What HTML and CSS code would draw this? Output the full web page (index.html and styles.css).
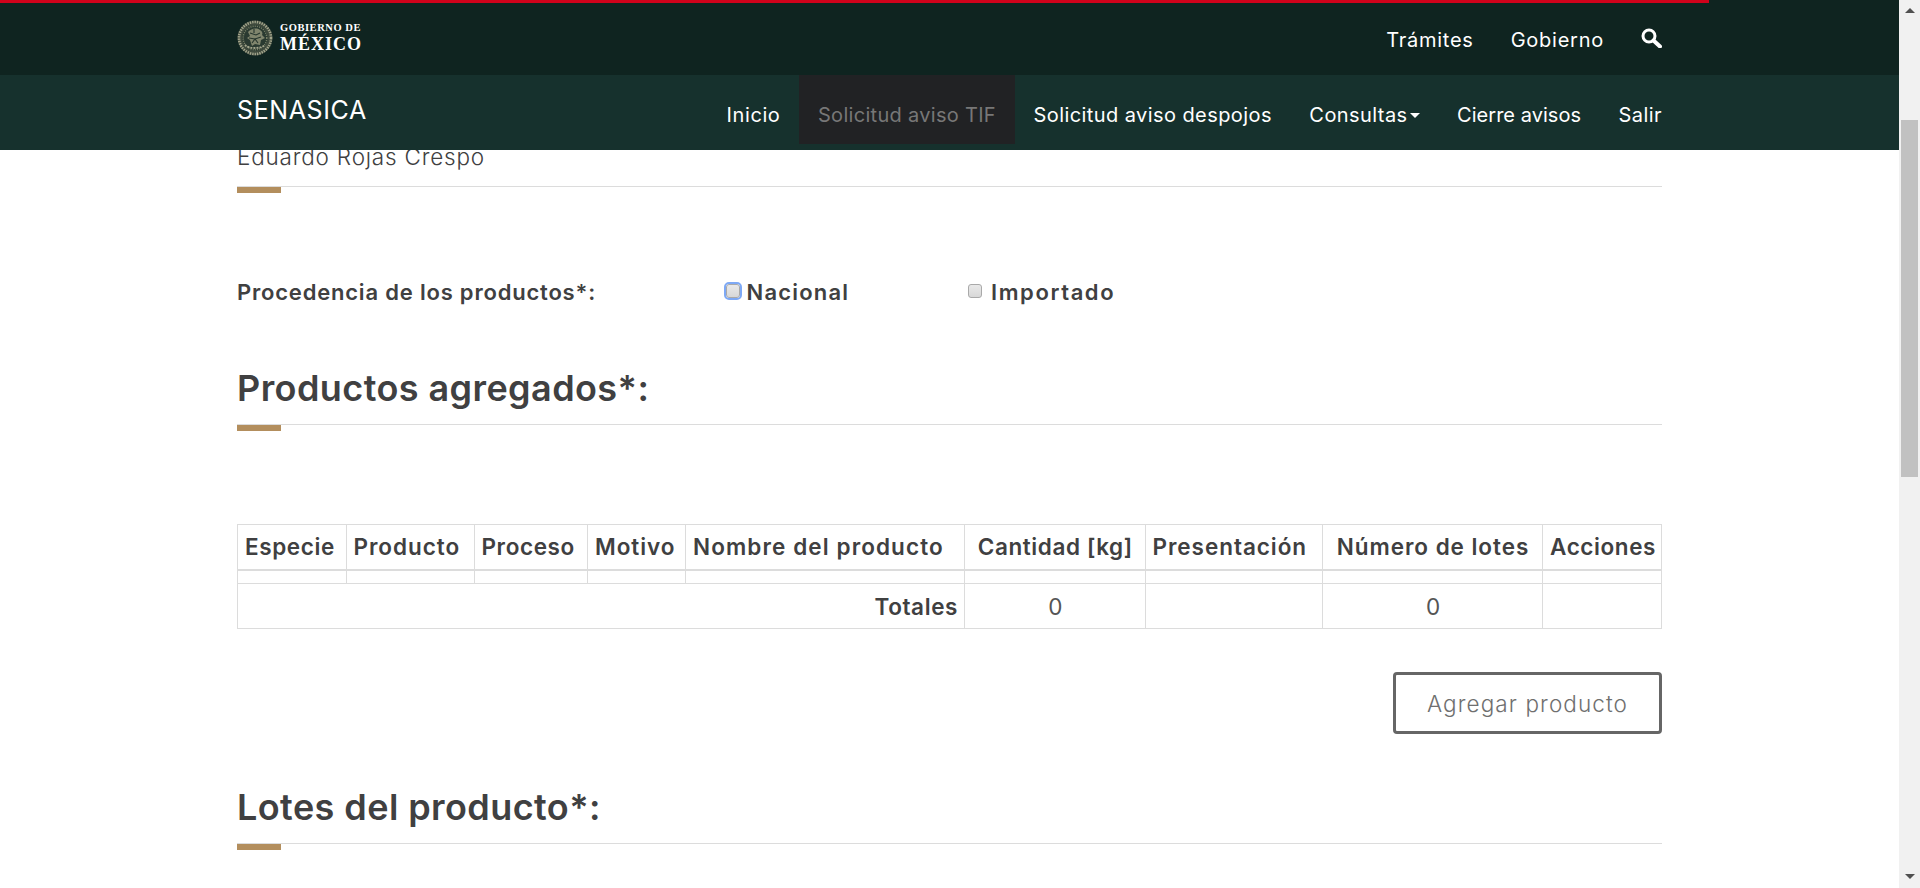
FILE: index.html
```html
<!DOCTYPE html>
<html lang="es">
<head>
<meta charset="utf-8">
<title>SENASICA</title>
<link rel="stylesheet" href="styles.css">
</head>
<body>
<div class="page">
  <div class="viewport">
    <header class="header">
      <div class="progress"></div>
      <div class="topbar">
        <div class="inner">
          <a class="logo">
            <svg class="emblem" viewBox="0 0 36 36" aria-hidden="true">
              <circle cx="18" cy="18" r="17.5" fill="#3f4a3d"/>
              <circle cx="18" cy="18" r="16" fill="none" stroke="#a3a58c" stroke-width="2.6" stroke-dasharray="1.4 1"/>
              <circle cx="18" cy="18" r="12.8" fill="#2a3a31"/>
              <circle cx="18" cy="18" r="11.8" fill="none" stroke="#7d8369" stroke-width="1.4" stroke-dasharray="1 1.2"/>
              <path d="M11 12c3-3 8-5 12-2 2 1 3 3 2 5l3 3-4 2-1 5-5-1-3 2-2-6-3-2 3-2z" fill="#80856d"/>
              <path d="M13 13l6 2 4-2M12 18l6 1 6-2M15 23l3-4 3 4M17 9v4" fill="none" stroke="#26362e" stroke-width="1.1"/>
              <path d="M8 25c4 4 16 4 20 0" fill="none" stroke="#a3a58c" stroke-width="1.8" stroke-dasharray="2 1"/>
            </svg>
            <span class="logo-text">
              <span class="logo-small">GOBIERNO DE</span>
              <span class="logo-big">MÉXICO</span>
            </span>
          </a>
          <nav class="topnav">
            <a>Trámites</a>
            <a>Gobierno</a>
            <svg class="search" viewBox="0 0 21 20" aria-hidden="true">
              <circle cx="8" cy="8" r="6" fill="none" stroke="#fff" stroke-width="3"/>
              <path d="M12.5 12.5L19 18.5" stroke="#fff" stroke-width="4" stroke-linecap="round"/>
            </svg>
          </nav>
        </div>
      </div>
      <div class="subbar">
        <div class="inner">
          <span class="brand">SENASICA</span>
          <nav class="mainnav">
            <a class="wide">Inicio</a>
            <a class="active">Solicitud aviso TIF</a>
            <a>Solicitud aviso despojos</a>
            <a>Consultas<span class="caret"></span></a>
            <a class="narrow">Cierre avisos</a>
            <a class="last">Salir</a>
          </nav>
        </div>
      </div>
    </header>

    <main class="content">
      <p class="name">Eduardo Rojas Crespo</p>
      <div class="rule"></div>

      <div class="origin">
        <span class="origin-label">Procedencia de los productos*:</span>
        <label class="check check-focus"><input type="checkbox"><span>Nacional</span></label>
        <label class="check check-wide"><input type="checkbox"><span>Importado</span></label>
      </div>

      <h2 class="title title-products">Productos agregados*:</h2>
      <div class="rule"></div>

      <table class="grid">
        <colgroup>
          <col class="c1"><col class="c2"><col class="c3"><col class="c4"><col class="c5">
          <col class="c6"><col class="c7"><col class="c8"><col class="c9">
        </colgroup>
        <thead>
          <tr>
            <th class="tight">Especie</th>
            <th>Producto</th>
            <th class="tight">Proceso</th>
            <th>Motivo</th>
            <th class="loose">Nombre del producto</th>
            <th class="center tight">Cantidad [kg]</th>
            <th>Presentación</th>
            <th class="center">Número de lotes</th>
            <th class="tight">Acciones</th>
          </tr>
        </thead>
        <tbody>
          <tr class="empty"><td></td><td></td><td></td><td></td><td></td><td></td><td></td><td></td><td></td></tr>
          <tr class="totals">
            <th colspan="5" class="right tight">Totales</th>
            <td class="center">0</td>
            <td></td>
            <td class="center">0</td>
            <td></td>
          </tr>
        </tbody>
      </table>

      <div class="actions"><button class="btn" type="button">Agregar producto</button></div>

      <h2 class="title title-lots">Lotes del producto*:</h2>
      <div class="rule"></div>
    </main>
  </div>

  <div class="scrollbar">
    <span class="arrow arrow-up"></span>
    <div class="track"><div class="thumb"></div></div>
    <span class="arrow arrow-down"></span>
  </div>
</div>
</body>
</html>
```

FILE: styles.css
```css
* { box-sizing: border-box; }

html, body {
  margin: 0;
  height: 100%;
  overflow: hidden;
  background: #fff;
}

body {
  font-family: Inter, "Open Sans", "Liberation Sans", sans-serif;
  color: #404041;
}

.page {
  display: flex;
  width: 1920px;
  height: 888px;
}

.viewport {
  position: relative;
  flex: 1;
  overflow: hidden;
}

/* Fixed header overlaying the scrolled page */
.header {
  position: absolute;
  top: 0;
  left: 0;
  right: 0;
  z-index: 2;
}

.progress {
  position: absolute;
  top: 0;
  left: 0;
  width: 1709px;
  height: 3px;
  background: #d0021b;
}

.inner {
  display: flex;
  justify-content: space-between;
  width: 1425px;
  height: 100%;
  margin-left: 237px;
}

.topbar {
  height: 75px;
  background: #0f2420;
}

.subbar {
  height: 75px;
  background: #16312d;
}

.logo {
  display: flex;
  align-items: center;
  gap: 7px;
  padding-top: 1px;
}

.emblem {
  width: 36px;
  height: 36px;
}

.logo-text {
  display: flex;
  flex-direction: column;
  font-family: "Liberation Serif", serif;
  font-weight: 700;
  color: #fff;
  line-height: 1;
}

.logo-small {
  font-size: 10.5px;
  letter-spacing: 0.55px;
}

.logo-big {
  font-size: 18px;
  letter-spacing: 1px;
  margin-top: 1px;
}

.topnav {
  display: flex;
  align-items: center;
  gap: 37px;
  font-size: 20px;
  color: #fff;
  letter-spacing: 0.75px;
  padding-top: 4px;
}

.search {
  width: 21px;
  height: 20px;
  margin-bottom: 3px;
}

.brand {
  font-size: 25px;
  line-height: 30px;
  color: #fff;
  padding-top: 20px;
  letter-spacing: 0.6px;
}

.mainnav {
  display: flex;
  height: 69px;
  font-size: 20px;
  color: #fff;
  letter-spacing: 0.42px;
}

.mainnav a {
  display: flex;
  align-items: center;
  padding: 10px 18.75px 0;
  white-space: nowrap;
}

.mainnav .last {
  padding-right: 0;
}

.mainnav .wide {
  letter-spacing: 0.6px;
}

.mainnav .narrow {
  letter-spacing: 0.04px;
}

.mainnav .active {
  background: #212224;
  color: #777;
  letter-spacing: 0.3px;
}

.caret {
  width: 0;
  height: 0;
  margin-left: 2px;
  margin-top: 2px;
  border-top: 5px solid #fff;
  border-left: 5px solid transparent;
  border-right: 5px solid transparent;
}

/* Page content */
.content {
  width: 1425px;
  margin-left: 237px;
  padding-top: 143px;
}

.name {
  margin: 0 0 16px;
  font-size: 22.5px;
  line-height: 27px;
  font-weight: 300;
  letter-spacing: 0.8px;
  color: #404041;
}

.rule {
  height: 1px;
  background: #dcdcdc;
}

.rule::after {
  content: "";
  display: block;
  width: 44px;
  height: 6px;
  background: #b38e5d;
  position: relative;
  top: 1px;
}

.origin {
  display: grid;
  grid-template-columns: 487px 244px 1fr;
  align-items: center;
  height: 28px;
  margin-top: 91px;
  font-size: 22px;
  font-weight: 600;
  letter-spacing: 0.8px;
}

.check {
  display: flex;
  align-items: center;
  letter-spacing: 1.2px;
}

.check-wide {
  letter-spacing: 1.6px;
}

.check input {
  appearance: none;
  width: 14px;
  height: 14px;
  margin: 0 9px 2px 0;
  border: 1px solid #a9a9a9;
  border-radius: 3px;
  background: linear-gradient(#e9e9e9, #d8d8d8);
}

.check-focus input {
  width: 14px;
  height: 14px;
  margin: 0 6.5px 2px 2px;
  outline: 2px solid #7ea9f5;
  outline-offset: 0;
}

.title {
  margin: 0;
  font-size: 36px;
  line-height: 44px;
  font-weight: 600;
  color: #404041;
  letter-spacing: 0.42px;
}

.title-products {
  margin-top: 60px;
  margin-bottom: 14px;
}

.grid {
  width: 1424px;
  margin-top: 99px;
  border-collapse: collapse;
  table-layout: fixed;
  font-size: 22.5px;
}

.c1 { width: 108.5px; }
.c2 { width: 128px; }
.c3 { width: 113.5px; }
.c4 { width: 98px; }
.c5 { width: 279px; }
.c6 { width: 180.5px; }
.c7 { width: 177.5px; }
.c8 { width: 220px; }
.c9 { width: 119px; }

.grid th,
.grid td {
  border: 1px solid #dcdcdc;
  padding: 0 6px 0 7px;
  white-space: nowrap;
  overflow: visible;
}

.grid th {
  height: 45px;
  font-weight: 600;
  text-align: left;
  letter-spacing: 0.95px;
}

.grid th.tight {
  letter-spacing: 0.6px;
}

.grid th.loose {
  letter-spacing: 1.1px;
}

.grid thead th {
  border-bottom-width: 2px;
}

.grid td {
  font-weight: 400;
  color: #555;
}

.grid .center { text-align: center; }
.grid .right { text-align: right; }

.empty td { height: 14px; padding: 0; }
.totals th, .totals td { height: 45px; }

.actions {
  display: flex;
  justify-content: flex-end;
  margin-top: 43px;
}

.btn {
  width: 269px;
  height: 62px;
  background: #fff;
  border: 3px solid #666;
  border-radius: 4px;
  font: 300 22.5px Inter, "Open Sans", sans-serif;
  letter-spacing: 1.1px;
  color: #6f6f6f;
}

.title-lots {
  margin-top: 51px;
  margin-bottom: 14px;
}

/* Scrollbar */
.scrollbar {
  display: flex;
  flex-direction: column;
  align-items: center;
  width: 21px;
  background: #f1f1f1;
}

.arrow {
  width: 0;
  height: 0;
  border-left: 5px solid transparent;
  border-right: 5px solid transparent;
}

.arrow-up {
  margin-top: 8px;
  border-bottom: 5px solid #505050;
}

.arrow-down {
  margin-bottom: 9px;
  border-top: 5px solid #505050;
}

.track {
  flex: 1;
  width: 100%;
  padding: 107px 2px 0;
}

.thumb {
  height: 357px;
  background: #c1c1c1;
}
```
